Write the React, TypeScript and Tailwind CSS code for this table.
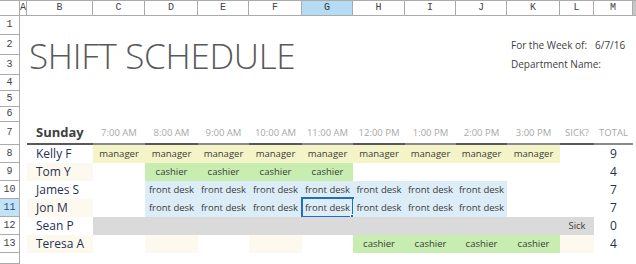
import React from "react";

// shared column track list for every sheet row (row header, A..M, scrollbar strip)
const COLS =
  "grid grid-cols-[20px_7px_66px_52px_53px_51px_53px_51px_52px_51px_51px_53px_34px_39px_1fr]";

type Kind = "" | "m" | "c" | "f" | "s" | "k";

type Person = {
  name: string;
  cream: boolean;
  cells: Kind[]; // columns C..L
  total: number;
  sick?: boolean;
};

const FILL: Record<Kind, string> = {
  "": "",
  m: "bg-[#f4f4c8]",
  c: "bg-[#c7eeb0]",
  f: "bg-[#dcedf8]",
  s: "bg-[#dadada]",
  k: "bg-[#fef9ee]",
};

const LABEL: Record<Kind, string> = {
  "": "",
  m: "manager",
  c: "cashier",
  f: "front desk",
  s: "",
  k: "",
};

const people: Person[] = [
  { name: "Kelly F", cream: false, cells: ["m", "m", "m", "m", "m", "m", "m", "m", "m", ""], total: 9 },
  { name: "Tom Y", cream: true, cells: ["", "c", "c", "c", "c", "", "", "", "", ""], total: 4 },
  { name: "James S", cream: false, cells: ["", "f", "f", "f", "f", "f", "f", "f", "", ""], total: 7 },
  { name: "Jon M", cream: true, cells: ["", "f", "f", "f", "f", "f", "f", "f", "", ""], total: 7 },
  { name: "Sean P", cream: false, cells: ["s", "s", "s", "s", "s", "s", "s", "s", "s", "s"], total: 0, sick: true },
  { name: "Teresa A", cream: true, cells: ["", "k", "", "k", "", "c", "c", "c", "c", "k"], total: 4 },
];

const hours = ["7:00 AM", "8:00 AM", "9:00 AM", "10:00 AM", "11:00 AM", "12:00 PM", "1:00 PM", "2:00 PM", "3:00 PM"];
const letters = ["A", "B", "C", "D", "E", "F", "G", "H", "I", "J", "K", "L", "M"];

const RowHead = ({ n, active = false, className = "" }: { n?: number; active?: boolean; className?: string }) => (
  <div
    className={`flex items-center justify-center border-r border-b border-[#ababab] font-['Liberation_Mono',monospace] text-[10px] leading-none ${
      active ? "bg-[#c4e2f6] text-[#1d4f86]" : "bg-white text-[#444]"
    } ${className}`}
  >
    {n}
  </div>
);

export default function App() {
  return (
    <div className="w-[636px] h-[264px] overflow-hidden bg-white flex flex-col font-['Open_Sans',sans-serif]">
      {/* column letters */}
      <div className={`${COLS} h-[16px] shrink-0 border-t border-[#ababab]`}>
        <div className="border-r border-b border-[#ababab] bg-white" />
        {letters.map((l) => (
          <div
            key={l}
            className={`flex items-center justify-center overflow-hidden border-r border-b border-[#ababab] font-['Liberation_Mono',monospace] text-[10px] leading-none ${
              l === "G" ? "bg-[#b6dcf4] text-[#333]" : "bg-white text-[#444]"
            }`}
          >
            {l}
          </div>
        ))}
        <div className="bg-[#c6c6c6] border-b border-[#ababab]" />
      </div>

      {/* row 1 */}
      <div className={`${COLS} h-[19px] shrink-0`}>
        <RowHead n={1} />
      </div>

      {/* rows 2-3: title and week info */}
      <div className={`${COLS} grid-rows-[20px_20px] shrink-0`}>
        <RowHead n={2} className="col-start-1 row-start-1" />
        <RowHead n={3} className="col-start-1 row-start-2" />
        <div className="col-start-3 col-end-11 row-start-1 row-end-3 flex items-center pl-[2px] pt-[1px] whitespace-nowrap text-[35px] font-light leading-none tracking-[-0.3px] text-[#595959]">
          SHIFT SCHEDULE
        </div>
        <div className="col-start-12 row-start-1 flex items-end pb-[2px] pl-[4px] whitespace-nowrap text-[10px] text-[#404040]">
          For the Week of:
        </div>
        <div className="col-start-14 row-start-1 flex items-end pb-[2px] pl-[1px] whitespace-nowrap text-[10px] text-[#404040]">
          6/7/16
        </div>
        <div className="col-start-12 row-start-2 flex items-end pb-[3px] pl-[4px] whitespace-nowrap text-[10px] text-[#404040]">
          Department Name:
        </div>
      </div>

      {/* rows 4-6 */}
      <div className={`${COLS} h-[16px] shrink-0`}>
        <RowHead n={4} />
      </div>
      <div className={`${COLS} h-[16px] shrink-0`}>
        <RowHead n={5} />
      </div>
      <div className={`${COLS} h-[15px] shrink-0`}>
        <RowHead n={6} />
      </div>

      {/* row 7: day and hour headings */}
      <div className={`${COLS} h-[23px] shrink-0`}>
        <RowHead n={7} />
        <div />
        <div className="flex items-center pl-[9px] pt-[1px] border-b-2 border-[#595959] text-[13px] font-bold text-[#404040]">
          Sunday
        </div>
        {[...hours, "SICK?", "TOTAL"].map((h, i) => (
          <div
            key={h}
            className={`flex items-center justify-center pt-[2px] whitespace-nowrap border-b-2 text-[9.5px] font-medium text-[#a8a8a8] ${
              i % 2 === 0 ? "border-[#8a8a8a]" : "border-[#595959]"
            }`}
          >
            {h}
          </div>
        ))}
      </div>

      {/* staff rows */}
      {people.map((p, r) => (
        <div key={p.name} className={`${COLS} h-[18px] shrink-0`}>
          <RowHead n={8 + r} active={p.name === "Jon M"} />
          <div />
          <div className={`flex items-center pl-[9px] text-[12px] font-medium text-[#1f3152] ${p.cream ? "bg-[#fef9ee]" : ""}`}>
            {p.name}
          </div>
          {p.cells.map((k, c) => {
            const selected = p.name === "Jon M" && c === 4;
            return (
              <div
                key={c}
                className={`relative flex items-center justify-center whitespace-nowrap text-[9.5px] text-[#3b3b3b] ${FILL[k]}`}
              >
                {p.sick && c === 9 ? "Sick" : LABEL[k]}
                {selected && (
                  <>
                    <div className="absolute -left-px -top-[2px] -right-px -bottom-px border-2 border-[#1e6fbf]" />
                    <div className="absolute -right-[3px] -bottom-[3px] w-[6px] h-[6px] bg-[#1e6fbf] border border-white" />
                  </>
                )}
              </div>
            );
          })}
          <div className="flex items-center justify-center text-[12px] text-[#1f3152]">{p.total}</div>
        </div>
      ))}

      {/* row 14, cut off */}
      <div className={`${COLS} flex-1`}>
        <RowHead />
      </div>
    </div>
  );
}
